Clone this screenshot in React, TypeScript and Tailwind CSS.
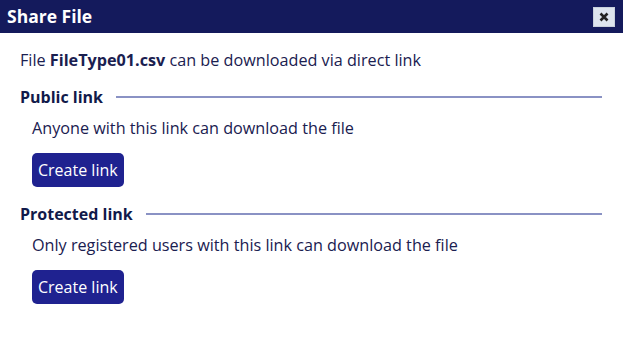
import React from "react";

function Section({ title, text }: { title: string; text: string }) {
  return (
    <div>
      <div className="flex items-center gap-[13px] pr-[21px]">
        <span className="text-[16px] font-bold leading-[22px] text-[#111a4a]">{title}</span>
        <div className="h-[2px] flex-1 bg-[#8a92c4]" />
      </div>
      <div className="pl-[12px]">
        <p className="mt-[9px] text-[16.2px] leading-[22px] text-[#1a2050]">{text}</p>
        <button className="mt-[14px] h-[34px] rounded-[5px] bg-[#1f2290] px-[6px] text-[16px] leading-[22px] text-white">
          Create link
        </button>
      </div>
    </div>
  );
}

export default function App() {
  return (
    <div className="h-[345px] w-[623px] bg-white" style={{ fontFamily: '"Open Sans", sans-serif' }}>
      {/* title bar */}
      <div className="flex h-[33px] items-center justify-between bg-[#141a5c] pl-[7px] pr-[8px]">
        <span className="text-[17.5px] font-bold text-white">Share File</span>
        <button className="flex h-[20px] w-[22px] items-center justify-center border border-[#c8d0dc] bg-[#dde4ee]">
          <svg width="10" height="10" viewBox="0 0 10 10">
            <path d="M1.5 1.5 L8.5 8.5 M8.5 1.5 L1.5 8.5" stroke="#222" strokeWidth="2.6" />
          </svg>
        </button>
      </div>

      <div className="pl-[20px] pt-[16px]">
        <p className="text-[16.2px] leading-[22px] text-[#1a2050]">
          File <b>FileType01.csv</b> can be downloaded via direct link
        </p>
        <div className="mt-[15px] flex flex-col gap-[16px]">
          <Section title="Public link" text="Anyone with this link can download the file" />
          <Section title="Protected link" text="Only registered users with this link can download the file" />
        </div>
      </div>
    </div>
  );
}
